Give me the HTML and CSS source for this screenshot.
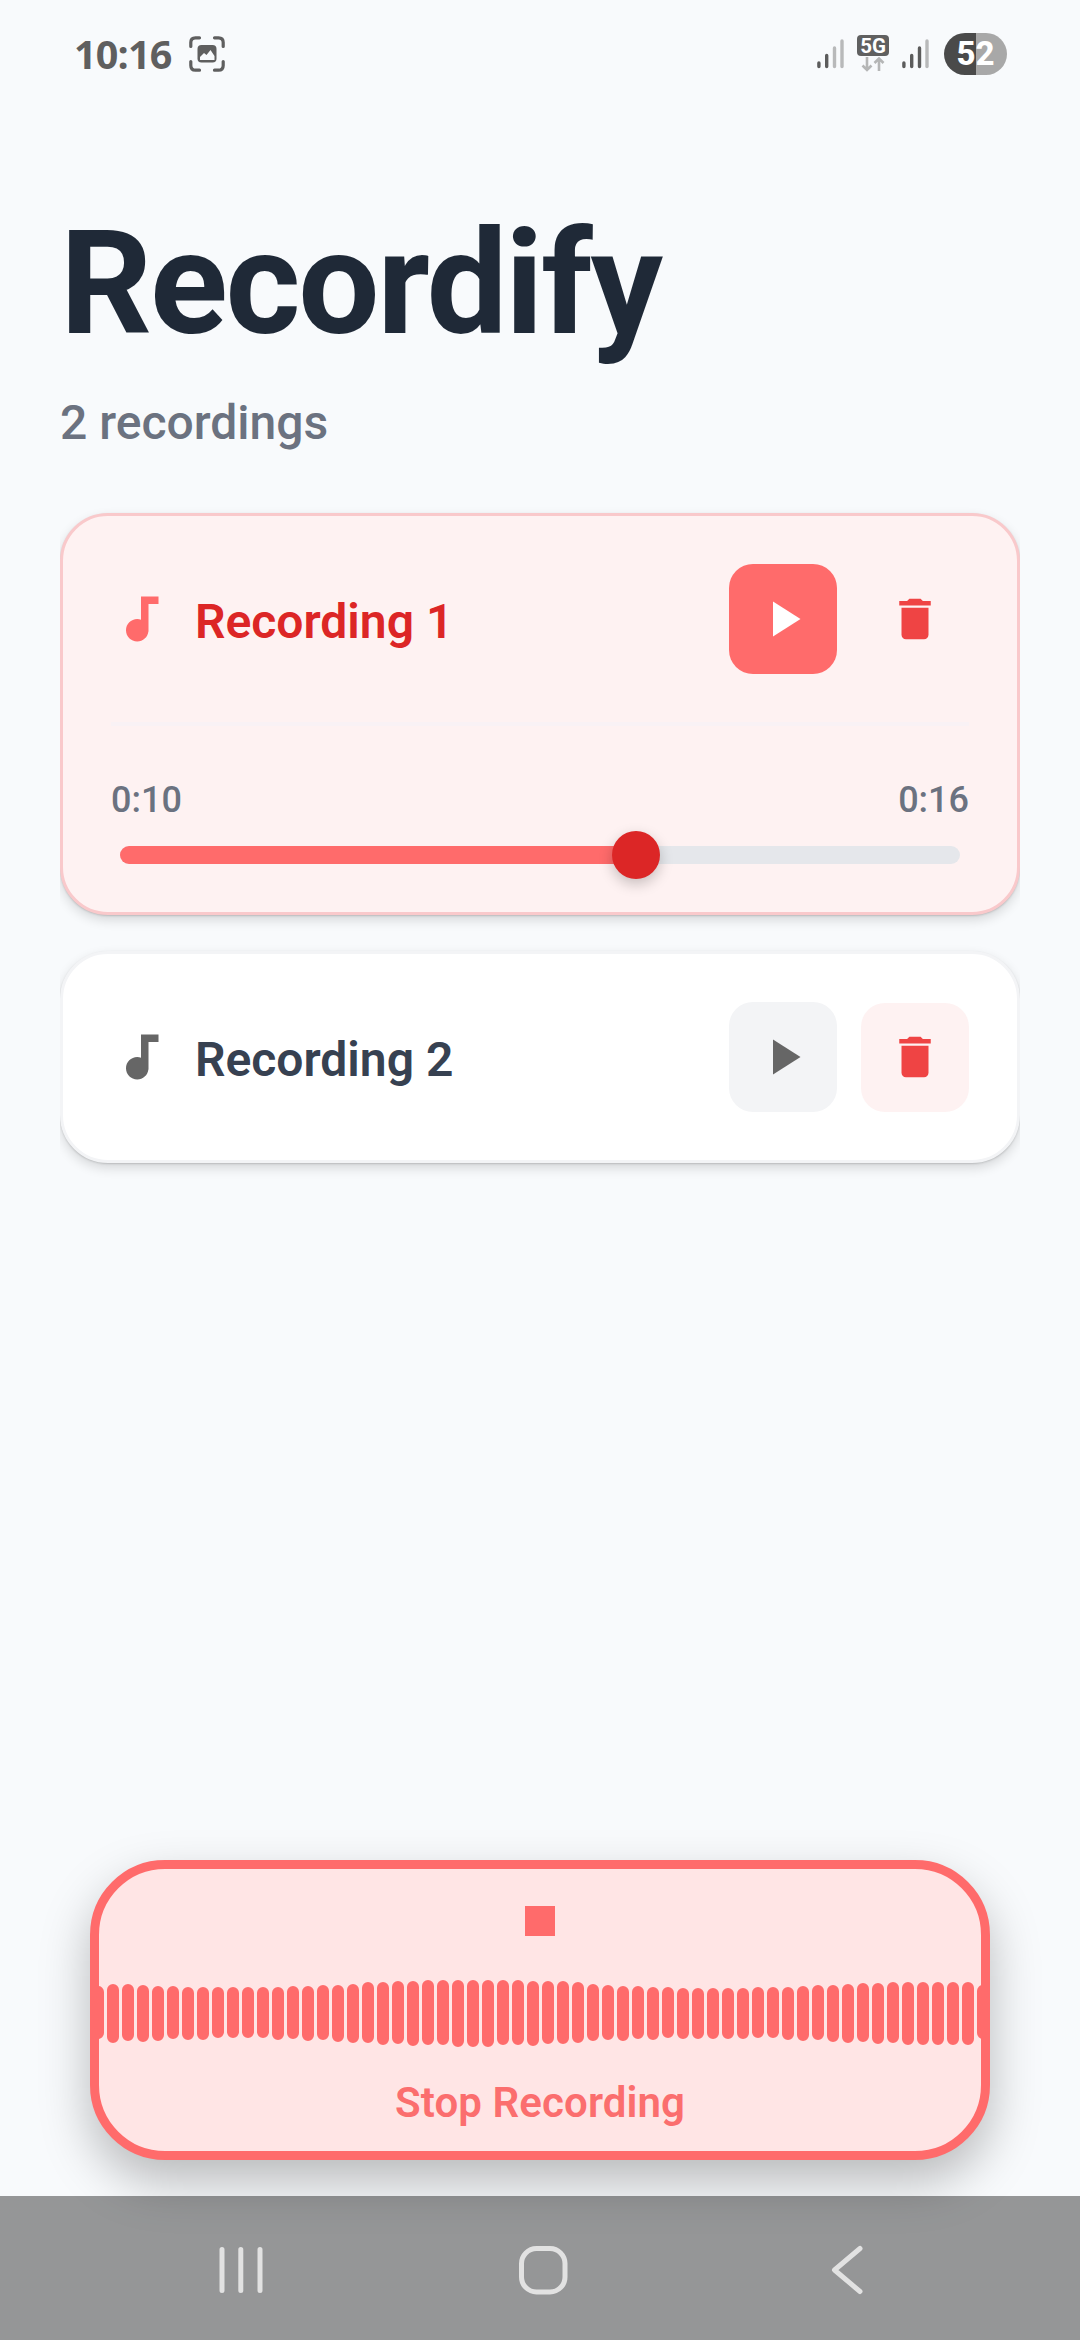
FILE: index.html
```html
<!DOCTYPE html>
<html lang="en">
<head>
<meta charset="utf-8">
<title>Recordify</title>
<link rel="stylesheet" href="styles.css">
</head>
<body>
<div class="screen">
  <header class="status">
    <div class="status-left">
      <span class="clock">10:16</span>
      <svg class="shot" width="36" height="36" viewBox="0 0 36 36">
        <path class="shot-frame" d="M1.8 10.500V6.500Q1.800 1.800 6.500 1.800H10.500M25.500 1.800H29.500Q34.200 1.800 34.200 6.500V10.500M34.200 25.500V29.500Q34.200 34.200 29.500 34.200H25.500M10.500 34.200H6.500Q1.800 34.200 1.800 29.500V25.500"/>
        <rect class="dark" x="8.500" y="9" width="19" height="17.500" rx="4"/>
        <path class="paper" d="M11 24v-3l4-4 2.500 2 4-5 4 6v4z"/>
      </svg>
    </div>
    <div class="status-right">
      <svg class="signal" width="27" height="30" viewBox="0 0 27 30">
        <path class="on" d="M1.900 24v3.500M9.700 16.500v11"/><path class="off" d="M17.500 9v18.500M25 2v25.500"/>
      </svg>
      <div class="network">
        <span class="badge">5G</span>
        <svg width="24" height="15" viewBox="0 0 24 15"><path class="arrows" d="M6 0v13M1.500 8.500L6 13l4.500-4.500M18 14V1.500M13.500 6L18 1.500 22.500 6"/></svg>
      </div>
      <svg class="signal second" width="27" height="30" viewBox="0 0 27 30">
        <path class="on" d="M1.900 24v3.500M9.700 16.500v11M17.500 9v18.500"/><path class="off" d="M25 2v25.500"/>
      </svg>
      <div class="battery">52</div>
    </div>
  </header>

  <main class="content">
    <h1 class="title">Recordify</h1>
    <p class="subtitle">2 recordings</p>

    <section class="list">
      <article class="card active">
        <div class="row">
          <svg class="note" width="60" height="60" viewBox="0 0 24 24"><path d="M12 3v9.280c-.47-.17-.97-.28-1.500-.28C8.010 12 6 14.010 6 16.500S8.010 21 10.500 21c2.310 0 4.200-1.750 4.450-4H15V6h4V3h-7z"/></svg>
          <span class="name">Recording 1</span>
          <button class="btn play"><svg width="60" height="60" viewBox="0 0 24 24"><path d="M8 5v14l11-7z"/></svg></button>
          <button class="btn delete"><svg width="54" height="54" viewBox="0 0 24 24"><path d="M6 19c0 1.100.9 2 2 2h8c1.100 0 2-.9 2-2V7H6v12zM19 4h-3.500l-1-1h-5l-1 1H5v2h14V4z"/></svg></button>
        </div>
        <div class="player">
          <div class="times"><span>0:10</span><span>0:16</span></div>
          <div class="track"><div class="fill" style="width:61.430%"><span class="thumb"></span></div></div>
        </div>
      </article>
      <article class="card">
        <div class="row">
          <svg class="note" width="60" height="60" viewBox="0 0 24 24"><path d="M12 3v9.280c-.47-.17-.97-.28-1.500-.28C8.010 12 6 14.010 6 16.500S8.010 21 10.500 21c2.310 0 4.200-1.750 4.450-4H15V6h4V3h-7z"/></svg>
          <span class="name">Recording 2</span>
          <button class="btn play"><svg width="60" height="60" viewBox="0 0 24 24"><path d="M8 5v14l11-7z"/></svg></button>
          <button class="btn delete"><svg width="54" height="54" viewBox="0 0 24 24"><path d="M6 19c0 1.100.9 2 2 2h8c1.100 0 2-.9 2-2V7H6v12zM19 4h-3.500l-1-1h-5l-1 1H5v2h14V4z"/></svg></button>
        </div>
      </article>
    </section>
  </main>

  <button class="record">
    <span class="stop"></span>
    <svg class="wave" width="882" height="67" viewBox="0 0 882 67">
      <path d="M-1 12V53M14 10V57M29 10V55M44 11V56M59 12V55M74 12V53M89 13V54M104 13V54M119 13V52M134 13V52M149 13V52M164 13V52M179 13V54M194 12V53M209 12V55M224 11V54M239 11V56M254 10V57M269 8V57M284 8V59M299 7V58M314 7V60M329 6V59M344 6V59M359 6V61M374 6V61M389 6V61M404 6V59M419 6V59M434 7V60M449 7V58M464 7V58M479 8V57M494 10V55M509 11V54M524 12V55M539 12V53M554 13V54M569 13V52M584 14V53M599 14V53M614 14V53M629 14V53M644 14V53M659 13V52M674 13V52M689 13V54M704 12V55M719 11V54M734 11V56M749 10V57M764 9V56M779 9V58M794 8V57M809 8V59M824 8V59M839 8V59M854 8V59M869 8V59M884 11V53"/>
    </svg>
    <span class="record-label">Stop Recording</span>
  </button>

  <nav class="nav">
    <svg width="46" height="52" viewBox="0 0 46 52"><path d="M4 5.500V46.500M22.800 5.500V46.500M42 5.500V46.500"/></svg>
    <svg class="home" width="52" height="52" viewBox="0 0 52 52"><rect x="4.500" y="4.500" width="43.500" height="43.500" rx="15"/></svg>
    <svg width="36" height="52" viewBox="0 0 36 52"><path d="M31 4.500L5.500 26 31 47.500"/></svg>
  </nav>
</div>
</body>
</html>
```
FILE: styles.css
```css
* { box-sizing: border-box; }
body {
  margin: 0;
  background: #f8fafc;
  font-family: Roboto, "Liberation Sans", sans-serif;
}
button { border: 0; padding: 0; font: inherit; }
svg { display: block; flex: none; }
.screen {
  width: 1080px;
  height: 2340px;
  display: flex;
  flex-direction: column;
  overflow: hidden;
}

/* Status bar */
.status {
  height: 108px;
  flex: none;
  padding: 0 73px 0 74px;
  display: flex;
  justify-content: space-between;
  align-items: center;
}
.status-left { display: flex; align-items: center; }
.clock {
  width: 115px;
  font: 700 39.5px/54px "Open Sans", "Noto Sans", sans-serif;
  letter-spacing: -0.8px;
  padding-bottom: 1px;
  color: #5f5f5f;
}
.shot-frame { fill: none; stroke: #5f5f5f; stroke-width: 3.2; stroke-linecap: round; }
.dark { fill: #5f5f5f; }
.paper { fill: #f8fafc; }
.status-right { display: flex; align-items: center; }
.signal path { fill: none; stroke-width: 3.4; stroke-linecap: round; }
.signal .on { stroke: #5c5c5c; }
.signal .off { stroke: #b8b9ba; }
.network {
  width: 32px;
  height: 42px;
  margin: 3px 13px 0 13px;
  display: flex;
  flex-direction: column;
  align-items: center;
  gap: 1px;
}
.badge {
  width: 32px;
  height: 21px;
  border-radius: 4px;
  background: #606060;
  color: #fff;
  font: 700 20.5px/22px Roboto, sans-serif;
  text-align: center;
}
.arrows { fill: none; stroke: #b5b6b6; stroke-width: 2.6; }
.battery {
  width: 63px;
  height: 42px;
  margin-left: 15px;
  border-radius: 21px;
  background: linear-gradient(90deg, #4a4a4a 32px, #a8a8a8 32px);
  color: #fff;
  font: 800 33px/41px Roboto, sans-serif;
  text-align: center;
}

/* Heading */
.content { padding: 80px 60px 0; flex: 1; }
.title {
  margin: 0;
  font-size: 144px;
  line-height: 192px;
  font-weight: 700;
  letter-spacing: -2.25px;
  color: #1f2937;
}
.subtitle {
  margin: 15px 0 0;
  font-size: 48px;
  line-height: 56px;
  font-weight: 500;
  color: #6b7280;
}

/* Recording cards; the list trims the shadows at its sides */
.list {
  margin-top: 62px;
  display: flex;
  flex-direction: column;
  gap: 36px;
  overflow-x: clip;
}
.card {
  padding: 48px;
  border: 3px solid #f3f4f6;
  border-radius: 48px;
  background: #fff;
  box-shadow: 0 1px 2px rgba(0,0,0,.16), 0 5px 12px rgba(0,0,0,.14);
}
.card.active { background: #fef2f2; border-color: #f9c9cb; }
.row { height: 110px; display: flex; align-items: center; }
.note { fill: #666; }
.name {
  flex: 1;
  margin-left: 24px;
  font-size: 48px;
  line-height: 56px;
  font-weight: 600;
  padding-top: 6px;
  color: #374151;
}
.btn {
  width: 108px;
  height: 110px;
  margin-left: 24px;
  border-radius: 24px;
  display: flex;
  align-items: center;
  justify-content: center;
}
.play { background: #f3f4f6; fill: #666; }
.delete { height: 109px; background: #fef2f2; fill: #ef4444; }
.active .note { fill: #ff6b6b; }
.active .name { color: #dc2626; }
.active .play { background: #ff6b6b; fill: #fff; }
.player { margin-top: 48px; border-top: 4px solid #f9f2f5; padding-top: 53px; }
.times {
  display: flex;
  justify-content: space-between;
  font-size: 36px;
  line-height: 42px;
  font-weight: 500;
  color: #6b7280;
}
.track {
  height: 18px;
  margin: 25px 9px 0;
  border-radius: 9px;
  background: #e5e7eb;
}
.fill {
  height: 18px;
  border-radius: 9px 0 0 9px;
  background: #ff6b6b;
  display: flex;
  justify-content: flex-end;
  align-items: center;
}
.thumb {
  flex: none;
  width: 48px;
  height: 48px;
  margin-right: -24px;
  border-radius: 50%;
  background: #dc2626;
  box-shadow: 0 5px 14px rgba(0,0,0,.22);
}

/* Record button */
.record {
  flex: none;
  width: 900px;
  height: 300px;
  margin: 0 90px 36px;
  padding-top: 37px;
  border: 9px solid #ff6b6b;
  border-radius: 75px;
  background: #ffe5e5;
  box-shadow: 0 22px 50px rgba(0,0,0,.26);
  display: flex;
  flex-direction: column;
  align-items: center;
}
.stop { width: 30px; height: 30px; background: #ff6b6b; }
.wave { margin-top: 44px; }
.wave path { stroke: #ff6b6b; stroke-width: 12; stroke-linecap: round; }
.record-label {
  margin-top: 31px;
  font-size: 42px;
  line-height: 50px;
  font-weight: 600;
  letter-spacing: 0.1px;
  color: #fb6e6e;
}

/* System navigation */
.nav {
  position: relative;
  flex: none;
  height: 144px;
  padding: 4px 215px 0 218px;
  background: rgba(0,0,0,.4);
  display: flex;
  align-items: center;
  justify-content: space-between;
}
.nav svg { fill: none; stroke: #e2e2e2; stroke-width: 5; stroke-linecap: round; stroke-linejoin: round; }
.nav .home { margin-right: 8px; }
```
